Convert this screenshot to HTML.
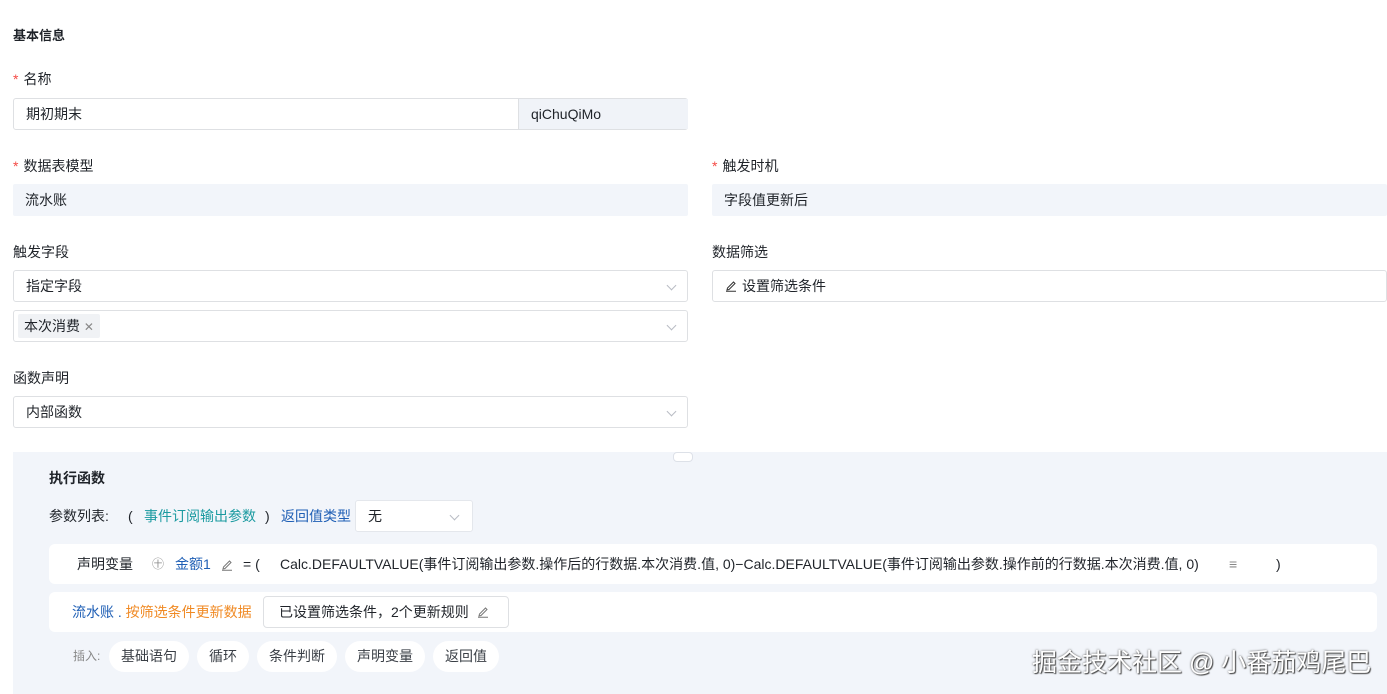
<!DOCTYPE html>
<html><head><meta charset="utf-8"><style>
*{margin:0;padding:0;box-sizing:border-box}
body{width:1387px;height:694px;background:#fff;position:relative;overflow:hidden;font-family:"Liberation Sans","Noto Sans CJK SC",sans-serif;font-size:14px;color:#1f2329}
.a{position:absolute;white-space:nowrap}
.lbl{position:absolute;line-height:18px;top:0}
.req:before{content:"*";color:#f54a45;margin-right:5px}
.box{position:absolute;height:32px;border:1px solid #dee0e3;border-radius:3px;line-height:30px;padding-left:12px;background:#fff}
.fill{position:absolute;height:32px;background:#f2f5fa;line-height:32px;padding-left:12px;border-radius:2px}
.chev{position:absolute;right:12px;top:11px;width:7px;height:7px;border-right:1px solid #b8bcc4;border-bottom:1px solid #b8bcc4;transform:rotate(45deg)}
.card{position:absolute;left:49px;width:1328px;height:40px;background:#fff;border-radius:6px;line-height:40px}
.chip{position:absolute;top:641px;height:31px;line-height:31px;background:#fff;border-radius:16px;padding:0 12px;color:#3a3f46}
</style></head><body>
<div class="lbl" style="left:13px;top:27px;font-weight:bold;font-size:13px">基本信息</div>
<div class="lbl req" style="left:13px;top:70px">名称</div>
<div class="box" style="left:13px;top:98px;width:675px;padding:0">
 <span class="a" style="left:12px;top:0">期初期末</span>
 <div class="a" style="left:504px;top:0;width:170px;height:30px;background:#f0f3f8;border-left:1px solid #dee0e3;padding-left:12px">qiChuQiMo</div>
</div>
<div class="lbl req" style="left:13px;top:157px">数据表模型</div>
<div class="fill" style="left:13px;top:184px;width:675px">流水账</div>
<div class="lbl req" style="left:712px;top:157px">触发时机</div>
<div class="fill" style="left:712px;top:184px;width:675px">字段值更新后</div>
<div class="lbl" style="left:13px;top:243px">触发字段</div>
<div class="box" style="left:13px;top:270px;width:675px">指定字段<i class="chev"></i></div>
<div class="box" style="left:13px;top:310px;width:675px;padding-left:4px"><span style="display:inline-block;background:#f0f2f5;height:24px;line-height:24px;padding:0 6px;margin-top:3px;vertical-align:top;border-radius:2px">本次消费 <span style="color:#888;font-size:12px">✕</span></span><i class="chev"></i></div>
<div class="lbl" style="left:712px;top:243px">数据筛选</div>
<div class="box" style="left:712px;top:270px;width:675px"><svg width="12" height="12" viewBox="0 0 12 12" style="vertical-align:-1px;margin-right:5px"><path d="M2 10L2.5 8L8.5 2L10 3.5L4 9.5Z M1 11.3H11" fill="none" stroke="#333" stroke-width="1"/></svg>设置筛选条件</div>
<div class="lbl" style="left:13px;top:369px">函数声明</div>
<div class="box" style="left:13px;top:396px;width:675px">内部函数<i class="chev"></i></div>

<div class="a" style="left:13px;top:452px;width:1374px;height:242px;background:#f2f5fa"></div>
<div class="a" style="left:673px;top:452px;width:20px;height:10px;background:#fff;border:1px solid #dde1e8;border-radius:4px"></div>
<div class="lbl" style="left:49px;top:469px;font-weight:bold">执行函数</div>
<div class="lbl" style="left:49px;top:507px">参数列表:</div>
<div class="lbl" style="left:128px;top:507px">(</div>
<div class="lbl" style="left:144px;top:507px;color:#1a9aa0">事件订阅输出参数</div>
<div class="lbl" style="left:265px;top:507px">)</div>
<div class="lbl" style="left:281px;top:507px;color:#1f5fb5">返回值类型</div>
<div class="box" style="left:355px;top:500px;width:118px;border-color:#e4e7ec">无<i class="chev" style="right:14px"></i></div>
<div class="card" style="top:544px">
 <span class="a" style="left:28px">声明变量</span>
 <span class="a" style="left:103px;color:#888;font-size:12px">㊉</span>
 <span class="a" style="left:126px;color:#1f5fb5">金额1</span>
 <svg class="a" style="left:172px;top:15px" width="12" height="12" viewBox="0 0 12 12"><path d="M2 10L2.5 8L8.5 2L10 3.5L4 9.5Z M1 11.3H11" fill="none" stroke="#777" stroke-width="1"/></svg>
 <span class="a" style="left:194px">= (</span>
 <span class="a" style="left:231px">Calc.DEFAULTVALUE(事件订阅输出参数.操作后的行数据.本次消费.值, 0)−Calc.DEFAULTVALUE(事件订阅输出参数.操作前的行数据.本次消费.值, 0)</span>
 <span class="a" style="left:1180px;color:#888">≡</span>
 <span class="a" style="left:1227px">)</span>
</div>
<div class="card" style="top:592px">
 <span class="a" style="left:23px;color:#1f5fb5">流水账 . <span style="color:#f08a24">按筛选条件更新数据</span></span>
 <div class="a" style="left:214px;top:4px;width:246px;height:32px;border:1px solid #dee0e3;border-radius:4px;line-height:30px;padding-left:15px">已设置筛选条件，2个更新规则 <svg width="12" height="12" viewBox="0 0 12 12" style="vertical-align:-1px;margin-left:4px"><path d="M2 10L2.5 8L8.5 2L10 3.5L4 9.5Z M1 11.3H11" fill="none" stroke="#777" stroke-width="1"/></svg></div>
</div>
<div class="lbl" style="left:73px;top:647px;font-size:12px;color:#888">插入:</div>
<div class="chip" style="left:109px">基础语句</div>
<div class="chip" style="left:197px">循环</div>
<div class="chip" style="left:257px">条件判断</div>
<div class="chip" style="left:345px">声明变量</div>
<div class="chip" style="left:433px">返回值</div>
<div class="a" style="left:1032px;top:643px;font-size:25px;color:#fff;text-shadow:0 0 2px #555,1px 1px 1px #444">掘金技术社区 @ 小番茄鸡尾巴</div>
</body></html>
